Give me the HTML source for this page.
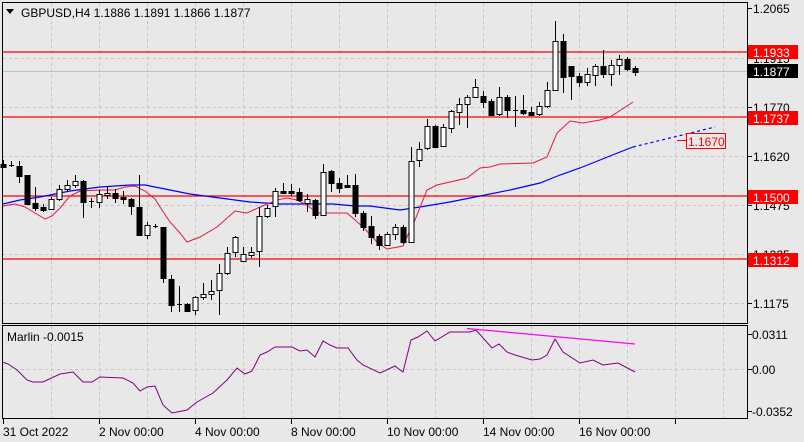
<!DOCTYPE html>
<html><head><meta charset="utf-8"><style>
html,body{margin:0;padding:0;background:#e8e8e8;}
svg{display:block;font-family:"Liberation Sans",Tahoma,sans-serif;font-size:12px;}
</style></head><body>
<svg width="804" height="442" viewBox="0 0 804 442" xmlns="http://www.w3.org/2000/svg">
<rect width="804" height="442" fill="#e8e8e8"/>
<!-- grid -->
<g stroke="#c4c4c4" stroke-dasharray="3,3" stroke-width="1">
<path d="M51.5 3V323M99.5 3V323M147.5 3V323M195.5 3V323M243.5 3V323M291.5 3V323M339.5 3V323M387.5 3V323M435.5 3V323M483.5 3V323M531.5 3V323M579.5 3V323M627.5 3V323M675.5 3V323M723.5 3V323"/>
<path d="M51.5 326V418M99.5 326V418M147.5 326V418M195.5 326V418M243.5 326V418M291.5 326V418M339.5 326V418M387.5 326V418M435.5 326V418M483.5 326V418M531.5 326V418M579.5 326V418M627.5 326V418M675.5 326V418M723.5 326V418"/>
<path d="M3 58.5H747M3 107.5H747M3 156.5H747M3 205.5H747M3 254.5H747M3 303.5H747M3 369.5H747"/>
</g>
<path d="M3 71.5H747" stroke="#c0c0c0"/>
<!-- horizontal levels -->
<g stroke="#ff0000" stroke-width="1.3">
<path d="M3 52H747M3 117H747M3 196H747M3 259H747"/>
</g>
<!-- blue MA -->
<polyline fill="none" stroke="#0000ff" stroke-width="1.2" points="3,204 20,200 40,197 70,191 100,187 130,185 145,185 165,189 190,194 220,198 250,202 280,204 300,204 333,204 355,206 370,206 385,208 400,210 420,207 450,202 480,196 510,190 540,183 560,175 580,168 600,160 620,152 633,147"/>
<path d="M633 147L715 127" stroke="#0000ff" stroke-width="1.2" stroke-dasharray="3,3"/>
<!-- red envelope -->
<polyline fill="none" stroke="#e8173a" stroke-width="1" points="3,206 15,204 25,207 35,213 45,219 52,216 60,208 70,196 80,191 100,190 115,190 125,187 135,186 145,191 155,199 160,207 170,222 180,233 187,242 200,237 217,227 235,211 247,213 260,207 277,200 287,198 297,200 307,205 317,213 330,213 347,213 363,227 378,243 387,249 403,246 410,230 415,220 427,190 437,185 450,182 467,178 480,168 490,167 500,164 533,163 547,157 557,133 570,121 583,123 600,120 610,117 633,102"/>
<!-- candles -->
<g stroke="#000" stroke-width="1" id="c"></g>
<g stroke="#000" stroke-width="1">
<path d="M3.5 160V168M11.5 161V167M19.5 161V183M27.5 175V205M35.5 187V211M43.5 204V212M51.5 197V210M59.5 185V201M67.5 180V192M75.5 175V188M83.5 180V218M91.5 198V208M99.5 190V208M107.5 187V199M115.5 189V203M123.5 191V204M131.5 198V215M139.5 175V235M147.5 222V239M155.5 224V228M163.5 227V283M171.5 275V312M179.5 286V312M187.5 303V312M195.5 296V315M203.5 283V300M211.5 280V300M219.5 264V315M227.5 247V275M235.5 236V257M243.5 247V261M251.5 247V258M259.5 207V267M267.5 205V218M275.5 188V217M283.5 183V193M291.5 184V196M299.5 188V202M307.5 194V212M315.5 199V219M323.5 164V216M331.5 170V192M339.5 178V193M347.5 175V188M355.5 174V217M363.5 211V231M371.5 216V244M379.5 234V250M387.5 232V246M395.5 224V240M403.5 225V244M411.5 147V243M419.5 142V167M427.5 119V150M435.5 125V147M443.5 124V147M451.5 110V133M459.5 98V125M467.5 95V128M475.5 79V98M483.5 91V108M491.5 99V115M499.5 87V116M507.5 95V118M515.5 96V127M523.5 95V115M531.5 107V116M539.5 102V116M547.5 82V108M555.5 21V90M563.5 34V93M571.5 66V100M579.5 73V87M587.5 68V86M595.5 64V86M603.5 50V78M611.5 60V86M619.5 55V75M627.5 57V71M635.5 66V76"/>
<path d="M9 165.5H14M89 201.5H94M153 226.5H158M177 304.5H182M513 110.5H518"/>
<g fill="#000">
<rect x="1" y="164.5" width="5" height="3"/><rect x="17" y="166.5" width="5" height="10"/><rect x="25" y="175.5" width="5" height="29"/><rect x="33" y="203.5" width="5" height="5"/><rect x="41" y="207.5" width="5" height="3"/><rect x="81" y="181.5" width="5" height="21"/><rect x="113" y="193.5" width="5" height="5"/><rect x="121" y="197.5" width="5" height="2"/><rect x="129" y="199.5" width="5" height="7"/><rect x="137" y="207.5" width="5" height="28"/><rect x="161" y="227.5" width="5" height="51"/><rect x="169" y="279.5" width="5" height="26"/><rect x="185" y="304.5" width="5" height="7"/><rect x="281" y="191.5" width="5" height="2"/><rect x="289" y="191.5" width="5" height="2"/><rect x="297" y="192.5" width="5" height="8"/><rect x="313" y="200.5" width="5" height="15"/><rect x="329" y="171.5" width="5" height="12"/><rect x="337" y="183.5" width="5" height="5"/><rect x="345" y="185.5" width="5" height="2"/><rect x="353" y="185.5" width="5" height="28"/><rect x="361" y="213.5" width="5" height="14"/><rect x="369" y="226.5" width="5" height="11"/><rect x="377" y="236.5" width="5" height="9"/><rect x="401" y="227.5" width="5" height="15"/><rect x="433" y="126.5" width="5" height="21"/><rect x="481" y="96.5" width="5" height="6"/><rect x="489" y="101.5" width="5" height="14"/><rect x="505" y="97.5" width="5" height="13"/><rect x="521" y="110.5" width="5" height="3"/><rect x="529" y="112.5" width="5" height="3"/><rect x="561" y="41.5" width="5" height="36"/><rect x="569" y="66.5" width="5" height="10"/><rect x="577" y="76.5" width="5" height="6"/><rect x="601" y="66.5" width="5" height="8"/><rect x="625" y="59.5" width="5" height="10"/><rect x="633" y="68.5" width="5" height="4"/>
</g>
<g fill="#fff">
<rect x="49" y="199.5" width="5" height="10"/><rect x="57" y="189.5" width="5" height="10"/><rect x="65" y="185.5" width="5" height="4"/><rect x="73" y="181.5" width="5" height="4"/><rect x="97" y="194.5" width="5" height="8"/><rect x="105" y="193.5" width="5" height="2"/><rect x="145" y="225.5" width="5" height="10"/><rect x="193" y="297.5" width="5" height="13"/><rect x="201" y="294.5" width="5" height="3"/><rect x="209" y="291.5" width="5" height="3"/><rect x="217" y="273.5" width="5" height="17"/><rect x="225" y="253.5" width="5" height="20"/><rect x="233" y="237.5" width="5" height="15"/><rect x="241" y="254.5" width="5" height="7"/><rect x="249" y="252.5" width="5" height="3"/><rect x="257" y="216.5" width="5" height="35"/><rect x="265" y="208.5" width="5" height="8"/><rect x="273" y="191.5" width="5" height="15"/><rect x="305" y="199.5" width="5" height="4"/><rect x="321" y="172.5" width="5" height="43"/><rect x="385" y="234.5" width="5" height="11"/><rect x="393" y="227.5" width="5" height="7"/><rect x="409" y="161.5" width="5" height="81"/><rect x="417" y="149.5" width="5" height="11"/><rect x="425" y="126.5" width="5" height="22"/><rect x="441" y="127.5" width="5" height="19"/><rect x="449" y="111.5" width="5" height="17"/><rect x="457" y="104.5" width="5" height="8"/><rect x="465" y="97.5" width="5" height="7"/><rect x="473" y="87.5" width="5" height="10"/><rect x="497" y="97.5" width="5" height="17"/><rect x="537" y="106.5" width="5" height="8"/><rect x="545" y="90.5" width="5" height="16"/><rect x="553" y="41.5" width="5" height="49"/><rect x="585" y="74.5" width="5" height="8"/><rect x="593" y="66.5" width="5" height="9"/><rect x="609" y="65.5" width="5" height="9"/><rect x="617" y="59.5" width="5" height="6"/>
</g>
</g>
<!-- indicator -->
<polyline fill="none" stroke="#800080" stroke-width="1" points="2,362 8,364 17,370 27,380 33,382 43,382 60,374 73,372 83,382 92,382 100,377 123,378 133,383 140,391 147,387 155,386 163,405 172,413 187,410 197,402 213,393 227,380 237,368 245,374 252,371 260,355 267,352 275,347 292,347 300,351 307,350 315,357 323,341 330,345 337,348 348,348 357,360 363,365 380,373 395,366 400,370 403,372 411,340 418,337 427,331 435,341 450,332 470,332 476,330 492,348 499,344 507,352 515,355 532,360 540,359 547,355 555,339 563,352 580,363 593,360 603,365 618,363 635,372"/>
<path d="M467 328.5L635 344" stroke="#ff00ff" stroke-width="1.2"/>
<!-- frames -->
<g stroke="#000" stroke-width="1" fill="none">
<rect x="2.5" y="2.5" width="745" height="321"/>
<rect x="2.5" y="325.5" width="745" height="93"/>
<path d="M3.5 419V424M99.5 419V424M195.5 419V424M291.5 419V424M387.5 419V424M483.5 419V424M579.5 419V424M675.5 419V424"/>
<path d="M748 8.5H752M748 58.5H752M748 107.5H752M748 156.5H752M748 205.5H752M748 254.5H752M748 303.5H752M748 334.5H752M748 369.5H752M748 411.5H752"/>
</g>
<!-- texts -->
<path d="M6 9L14 9L10 14Z" fill="#000"/>
<text x="21" y="17" fill="#000">GBPUSD,H4  1.1886 1.1891 1.1866 1.1877</text>
<text x="7" y="341" fill="#000">Marlin -0.0015</text>
<g fill="#000">
<text x="753" y="13">1.2065</text>
<text x="753" y="63">1.1915</text>
<text x="753" y="112">1.1770</text>
<text x="753" y="161">1.1620</text>
<text x="753" y="210">1.1475</text>
<text x="753" y="259">1.1325</text>
<text x="753" y="308">1.1175</text>
<text x="752" y="339">0.0311</text>
<text x="752" y="374">0.00</text>
<text x="752" y="416">-0.0352</text>
</g>
<g fill="#000">
<text x="3" y="436">31 Oct 2022</text>
<text x="99" y="436">2 Nov 00:00</text>
<text x="195" y="436">4 Nov 00:00</text>
<text x="291" y="436">8 Nov 00:00</text>
<text x="387" y="436">10 Nov 00:00</text>
<text x="483" y="436">14 Nov 00:00</text>
<text x="579" y="436">16 Nov 00:00</text>
</g>
<!-- price boxes -->
<rect x="748" y="45" width="50" height="14" fill="#ff0000"/>
<text x="753" y="57" fill="#fff">1.1933</text>
<rect x="748" y="64" width="50" height="14" fill="#000"/>
<text x="753" y="76" fill="#fff">1.1877</text>
<rect x="748" y="111" width="50" height="14" fill="#ff0000"/>
<text x="753" y="123" fill="#fff">1.1737</text>
<rect x="748" y="190" width="50" height="14" fill="#ff0000"/>
<text x="753" y="202" fill="#fff">1.1500</text>
<rect x="748" y="253" width="50" height="14" fill="#ff0000"/>
<text x="753" y="265" fill="#fff">1.1312</text>
<path d="M677 140.5H686" stroke="#ff0000"/>
<rect x="686.5" y="133.5" width="39" height="15" fill="#e8e8e8" stroke="#ff0000"/>
<text x="688" y="146" fill="#ff0000">1.1670</text>
</svg>
</body></html>
